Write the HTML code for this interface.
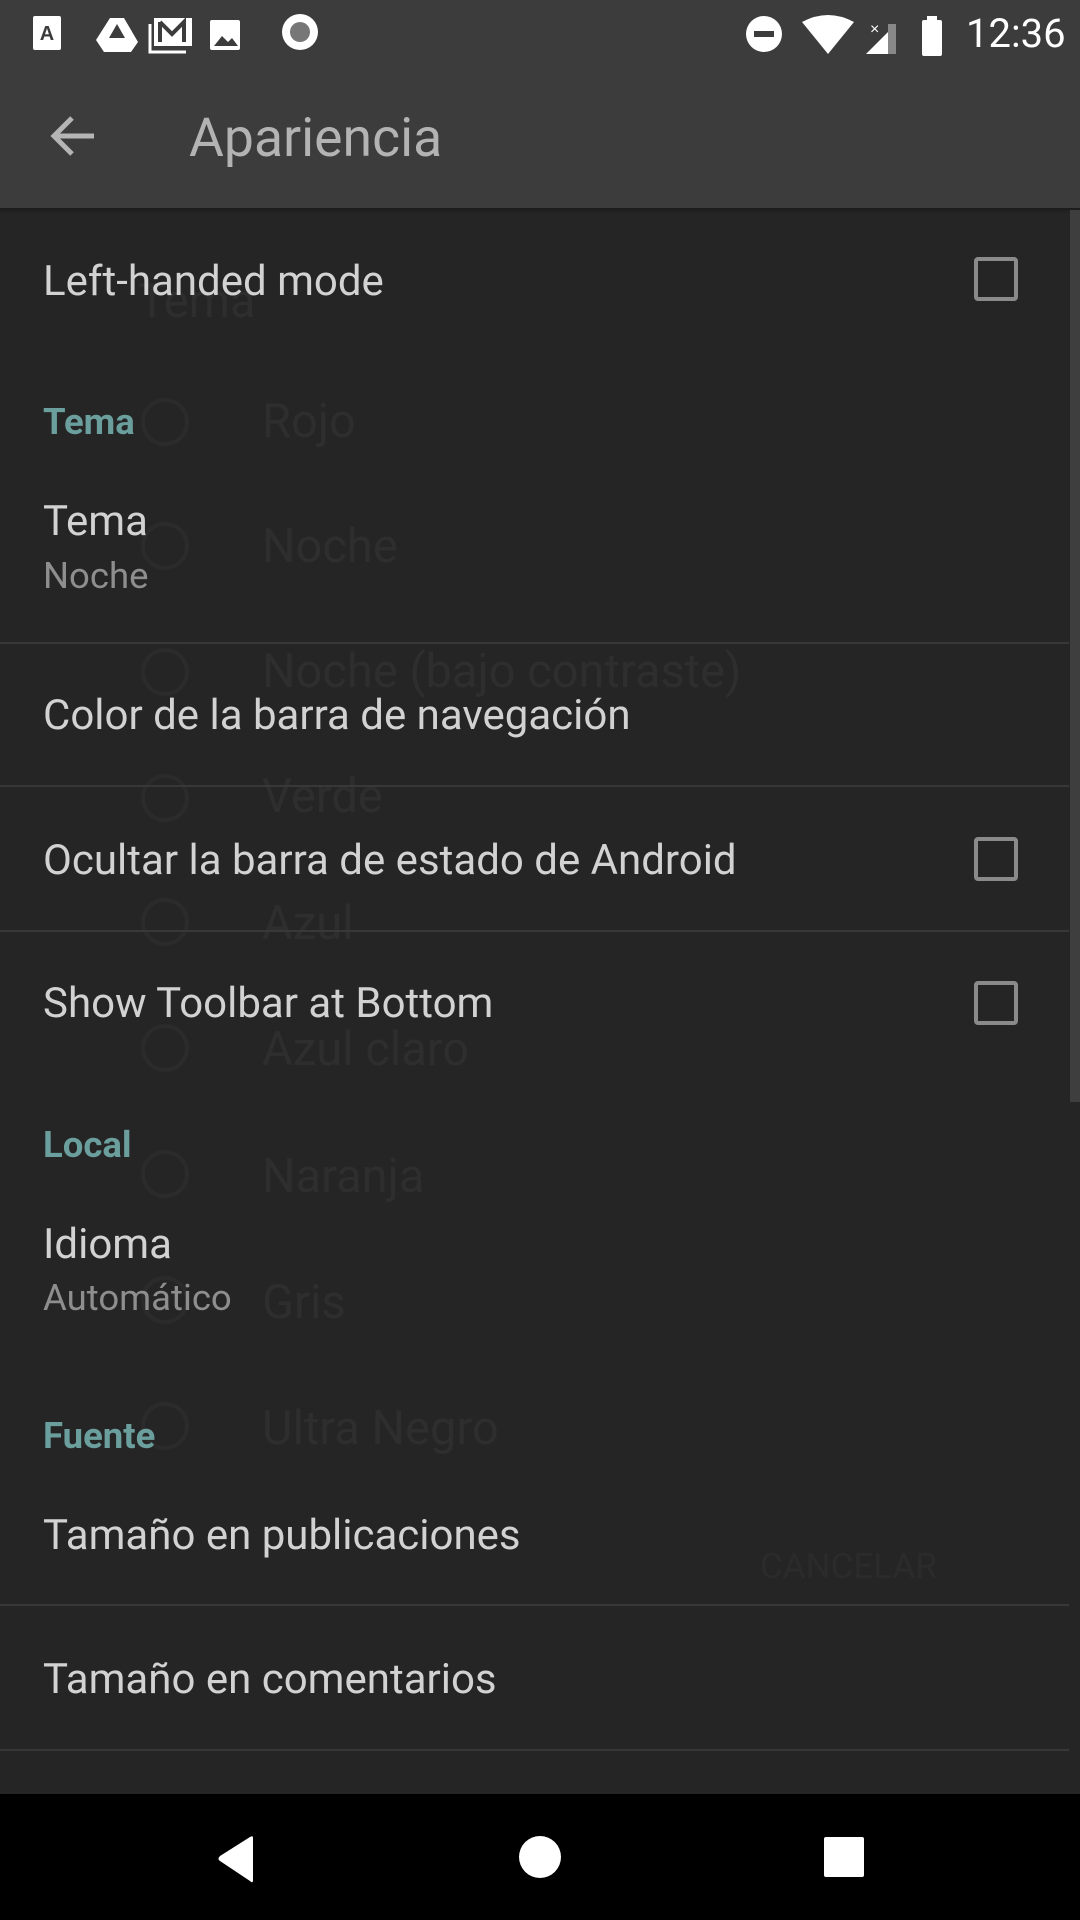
<!DOCTYPE html>
<html><head><meta charset="utf-8"><style>
*{margin:0;padding:0;box-sizing:border-box}
body{width:1080px;height:1920px;background:#252525;position:relative;overflow:hidden;font-family:"Roboto","Liberation Sans",sans-serif}
.a{position:absolute;white-space:nowrap}
.t{font-size:42px;color:#d2d2d2;line-height:50px;left:43px}
.s{font-size:36.5px;color:#8e8e8e;line-height:44px;left:43px}
.h{font-size:36.5px;color:#6b9f9d;font-weight:bold;line-height:44px;left:43px}
.d{left:0;width:1069px;height:2px;background:#383838}
.cb{left:974px;width:44px;height:44px;border:4px solid #8a8a8a;border-radius:4px}
.g{color:#2e2e2e;font-size:47px;line-height:54px;left:262px}
.r{left:141px;width:48px;height:48px;border:4px solid #2b2b2b;border-radius:50%}
</style></head><body>
<div class="a" style="left:0;top:0;width:1080px;height:208px;background:#3c3c3c"></div>
<div class="a" style="left:0;top:208px;width:1080px;height:6px;background:linear-gradient(#1c1c1c,#252525)"></div>
<svg class="a" style="left:30px;top:14px" width="300" height="40" viewBox="0 0 300 40">
<rect x="3" y="2" width="28" height="34" rx="2" fill="#fff"/><text x="17" y="26" font-size="20" font-weight="bold" text-anchor="middle" fill="#3c3c3c" font-family="Liberation Sans">A</text>
<path d="M80 4h14l14 24-7 10H74l-8-12z" fill="#fff"/><path d="M87 10l-8 14h16z" fill="#3c3c3c"/>
<rect x="124" y="4" width="38" height="28" fill="#fff"/><path d="M130 8v20M130 8l12 12 12-12v20" stroke="#3c3c3c" stroke-width="4" fill="none"/><path d="M120 10v28h36" stroke="#fff" stroke-width="3" fill="none"/>
<rect x="180" y="6" width="30" height="30" rx="2" fill="#fff"/><path d="M184 32l8-10 6 6 4-4 6 8z" fill="#3c3c3c"/>
</svg>
<svg class="a" style="left:280px;top:12px" width="40" height="40"><circle cx="20" cy="20" r="18" fill="#fff"/><circle cx="20" cy="20" r="10" fill="#777"/></svg>
<svg class="a" style="left:740px;top:10px" width="230" height="48" viewBox="0 0 230 48">
<circle cx="24" cy="24" r="18" fill="#fff"/><rect x="14" y="21" width="20" height="6" fill="#3c3c3c"/>
<path d="M62 12q26-14 52 0L88 44z" fill="#fff"/>
<path d="M126 44L156 14v30z" fill="#fff"/><rect x="148" y="14" width="8" height="30" fill="#888"/><text x="130" y="24" font-size="16" fill="#fff" font-family="Liberation Sans">×</text>
<rect x="182" y="10" width="20" height="36" rx="2" fill="#fff"/><rect x="187" y="6" width="10" height="6" fill="#fff"/>
</svg>
<div class="a" style="left:966px;top:10px;font-size:40px;color:#fff;line-height:48px">12:36</div>
<svg class="a" style="left:48px;top:114px" width="50" height="44" viewBox="0 0 50 44"><path d="M46 22H6M24 4L6 22l18 18" stroke="#b5b5b5" stroke-width="5" fill="none"/></svg>
<div class="a" style="left:189px;top:108px;font-size:53.5px;color:#b3b3b3;line-height:62px">Apariencia</div>
<div class="a g" style="left:138px;top:275px">Tema</div>
<div class="a r" style="top:398px"></div><div class="a g" style="top:395px">Rojo</div>
<div class="a r" style="top:522px"></div><div class="a g" style="top:520px">Noche</div>
<div class="a r" style="top:648px"></div><div class="a g" style="top:645px">Noche (bajo contraste)</div>
<div class="a r" style="top:774px"></div><div class="a g" style="top:770px">Verde</div>
<div class="a r" style="top:898px"></div><div class="a g" style="top:897px">Azul</div>
<div class="a r" style="top:1024px"></div><div class="a g" style="top:1023px">Azul claro</div>
<div class="a r" style="top:1150px"></div><div class="a g" style="top:1150px">Naranja</div>
<div class="a r" style="top:1276px"></div><div class="a g" style="top:1276px">Gris</div>
<div class="a r" style="top:1402px"></div><div class="a g" style="top:1402px">Ultra Negro</div>
<div class="a" style="left:760px;top:1546px;color:#2b2b2b;font-size:35px">CANCELAR</div>
<div class="a t" style="top:257px">Left-handed mode</div><div class="a cb" style="top:257px"></div>
<div class="a h" style="top:400px">Tema</div>
<div class="a t" style="top:497px">Tema</div>
<div class="a s" style="top:554px">Noche</div>
<div class="a d" style="top:642px"></div>
<div class="a t" style="top:691px">Color de la barra de navegación</div>
<div class="a d" style="top:785px"></div>
<div class="a t" style="top:836px">Ocultar la barra de estado de Android</div><div class="a cb" style="top:837px"></div>
<div class="a d" style="top:930px"></div>
<div class="a t" style="top:979px">Show Toolbar at Bottom</div><div class="a cb" style="top:981px"></div>
<div class="a h" style="top:1123px">Local</div>
<div class="a t" style="top:1220px">Idioma</div>
<div class="a s" style="top:1276px">Automático</div>
<div class="a h" style="top:1414px">Fuente</div>
<div class="a t" style="top:1511px">Tamaño en publicaciones</div>
<div class="a d" style="top:1604px"></div>
<div class="a t" style="top:1655px">Tamaño en comentarios</div>
<div class="a d" style="top:1749px"></div>
<div class="a" style="left:1070px;top:210px;width:10px;height:892px;background:#3e3e3e"></div>
<div class="a" style="left:0;top:1794px;width:1080px;height:126px;background:#000"></div>
<svg class="a" style="left:0;top:1794px" width="1080" height="126">
<path d="M253 44v42q0 4-3 1L220 67q-3-2 0-5l30-19q3-2 3 1z" fill="#fff"/>
<circle cx="540" cy="63" r="21" fill="#fff"/>
<rect x="824" y="43" width="40" height="40" rx="2" fill="#fff"/>
</svg>
</body></html>
